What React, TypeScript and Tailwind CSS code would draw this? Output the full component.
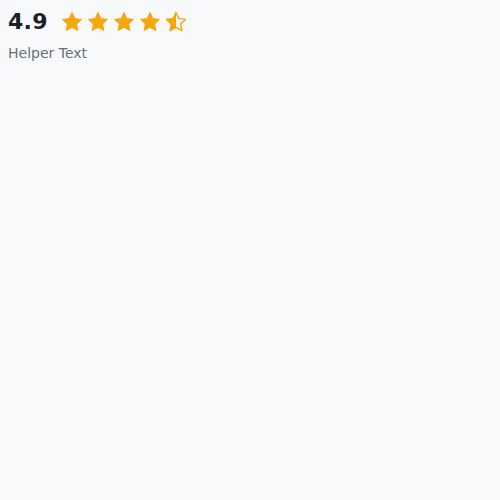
import React from "react";

function Star({ fill }: { fill: "full" | "half" }) {
  const d =
    "M12 2.5l2.9 6.1 6.6.8-4.9 4.6 1.3 6.6L12 17.3l-5.9 3.3 1.3-6.6-4.9-4.6 6.6-.8z";
  return (
    <svg width="24" height="24" viewBox="0 0 24 24" className="block">
      <defs>
        <clipPath id="halfclip">
          <rect x="0" y="0" width="12" height="24" />
        </clipPath>
      </defs>
      {fill === "full" ? (
        <path d={d} fill="#f5a70f" stroke="#f5a70f" strokeWidth="1" strokeLinejoin="round" />
      ) : (
        <>
          <path d={d} fill="none" stroke="#f5a70f" strokeWidth="1.4" strokeLinejoin="round" />
          <path d={d} fill="#f5a70f" stroke="#f5a70f" strokeWidth="1" strokeLinejoin="round" clipPath="url(#halfclip)" />
        </>
      )}
    </svg>
  );
}

export default function App() {
  return (
    <div className="min-h-screen bg-[#f8f9fb] px-2 pt-[5px]" style={{ fontFamily: "'DejaVu Sans', sans-serif" }}>
      <div className="flex items-center gap-[12px]">
        <span className="text-[22px] font-semibold text-[#1d2125] tracking-[0.3px]">4.9</span>
        <div className="flex items-center gap-[2px]">
          <Star fill="full" />
          <Star fill="full" />
          <Star fill="full" />
          <Star fill="full" />
          <Star fill="half" />
        </div>
      </div>
      <p className="mt-[5px] text-[14px] text-[#6b6f76]">Helper Text</p>
    </div>
  );
}
